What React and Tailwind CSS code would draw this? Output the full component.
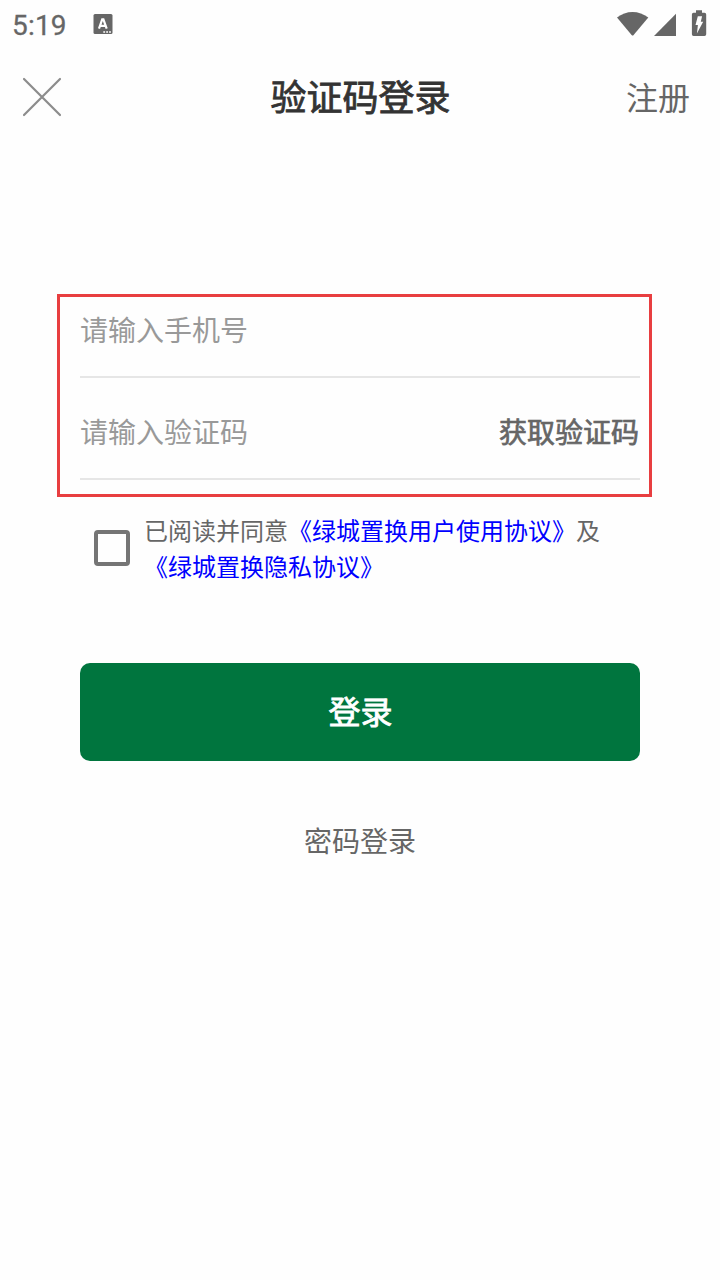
import React from "react";

function StatusBar() {
  return (
    <div className="flex h-12 items-center text-[#666]">
      <span className="ml-[12px] w-[81px] pt-[3px] font-['Roboto',sans-serif] text-[28px] leading-[48px] tracking-[0.2px] [-webkit-text-stroke:0.3px_#666]">5:19</span>
      <svg className="h-5 w-5" viewBox="0 0 20 20">
        <rect x="0.5" y="0" width="19" height="20" rx="1.5" fill="#666" />
        <path d="M6 14.6 L9.2 5.3 H10.4 L13.7 14.6 M7.3 11.8 H12.4" fill="none" stroke="#fff" strokeWidth="2.2" />
        <path d="M10.3 17.2h1.8v1.6h-1.8zM13.2 17.2h1.8v1.6h-1.8zM16.1 17.2h1.8v1.6h-1.8z" fill="#fff" />
      </svg>
      <svg className="ml-auto h-12 w-[110px]" viewBox="610 0 110 48" fill="#666">
        <path d="M617 17.5C626 10 639 10 648.3 17.5L633.6 35Q632.6 36 631.6 35Z" />
        <path d="M676 13.8V36H654Z" />
        <path d="M696 10.2h6v2.5h2.5q1.7 0 1.7 1.7V34.2q0 1.7-1.7 1.7h-11q-1.6 0-1.6-1.7V14.4q0-1.7 1.6-1.7H696Z" />
        <path d="M697.8 16.3h4.3l-1.3 5.4h2.4l-6.3 11.8 1-8.6h-2.4Z" fill="#fefefe" />
      </svg>
    </div>
  );
}

function Header() {
  return (
    <header className="grid h-[98px] grid-cols-[1fr_auto_1fr] items-center">
      <button aria-label="关闭" className="ml-[22px] h-10 w-10">
        <svg className="h-10 w-10" viewBox="0 0 40 40" stroke="#8c8c8c" strokeWidth="2.2" strokeLinecap="round">
          <path d="M2 2L38 38M38 2L2 38" />
        </svg>
      </button>
      <h1 className="pb-1 pl-px text-[36px] leading-[54px] text-[#333] [-webkit-text-stroke:0.8px_#333]">验证码登录</h1>
      <button className="mr-[30px] justify-self-end pb-0.5 text-[32px] leading-[48px] text-[#666]">注册</button>
    </header>
  );
}

export default function App() {
  return (
    <main className="h-[1280px] w-[720px] bg-[#fefefe] font-['Noto_Sans_CJK_SC',sans-serif]">
      <StatusBar />
      <Header />
      <section className="mt-[148px] ml-[57px] h-[203px] w-[595px] border-3 border-[#e83e40] pl-5 pr-[9px]">
        <div className="flex h-[81px] items-center border-b-2 border-[#e6e6e6] pb-[16px] text-[28px] text-[#999]">
          <span>请输入手机号</span>
        </div>
        <div className="flex h-[102px] items-center justify-between border-b-2 border-[#e6e6e6] pt-[5px] text-[28px]">
          <span className="text-[#999]">请输入验证码</span>
          <button className="pr-px text-[#666] [-webkit-text-stroke:0.7px_#666]">获取验证码</button>
        </div>
      </section>
      <div className="mt-[15px] flex h-[72px] pl-[94px] text-[24px] leading-[36px] text-[#666]">
        <span role="checkbox" aria-checked="false" className="mt-[18px] h-9 w-9 rounded-[4px] border-4 border-[#757575]" />
        <p className="ml-[14px] whitespace-nowrap">
          已阅读并同意<span className="text-[#00f]">《绿城置换用户使用协议》</span>及<br />
          <span className="text-[#00f]">《绿城置换隐私协议》</span>
        </p>
      </div>
      <button className="mx-20 mt-[79px] flex h-[98px] w-[560px] items-center justify-center rounded-[10px] bg-[#00753e] pb-1 pl-px text-[32px] text-white [-webkit-text-stroke:0.8px_#fff]">登录</button>
      <div className="mt-[58px] flex justify-center">
        <button className="text-[28px] leading-[42px] text-[#666]">密码登录</button>
      </div>
    </main>
  );
}
